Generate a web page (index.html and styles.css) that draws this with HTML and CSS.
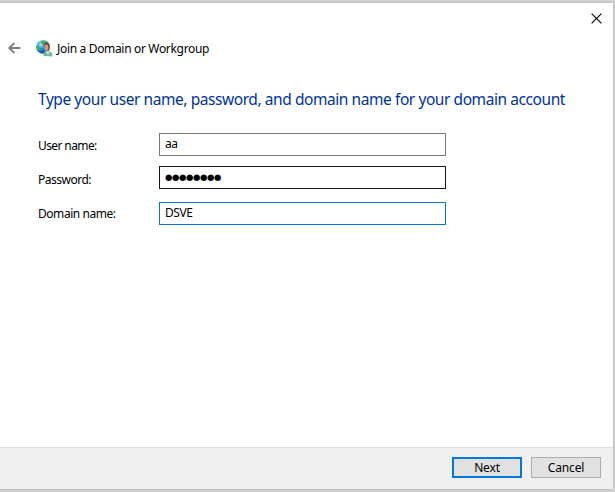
FILE: index.html
```html
<!DOCTYPE html>
<html lang="en">
<head>
<meta charset="utf-8">
<title>Join a Domain or Workgroup</title>
<link rel="stylesheet" href="styles.css">
</head>
<body>
<main class="dialog">
  <div class="titlebar">
    <svg class="close" width="11" height="11" viewBox="0 0 11 11"><path d="M.6.6l9.800 9.800M10.400.6L.6 10.400" fill="none" stroke="#111" stroke-width="1.3"/></svg>
  </div>
  <header class="header">
    <svg class="back" width="13" height="12" viewBox="0 0 13 12"><path d="M12.500 6H1.500M6.300 1L1.300 6l5 5" fill="none" stroke="#808080" stroke-width="1.9"/></svg>
    <svg class="globe" width="17" height="17" viewBox="0 0 17 17">
      <defs><radialGradient id="sea" cx=".35" cy=".3" r=".75"><stop offset="0" stop-color="#a5ebff"/><stop offset=".45" stop-color="#1c8ddd"/><stop offset="1" stop-color="#10348e"/></radialGradient></defs>
      <circle cx="7" cy="7" r="6.8" fill="url(#sea)"/>
      <path d="M6 1l4-.3 1.500 1.200-3 .8-1 2-1.500-.5-1-1.500zM.6 6l1.800.3 1.600 1.700-.4 2-1 1L.8 9z" fill="#42b649"/>
      <path d="M7.500 16l.3-3.500 2.200-1.500 3.500 0 2.500 2.200.5 3.300z" fill="#6bbb96"/>
      <path d="M10 11l2 4 1.500-4z" fill="#d7eee3"/>
      <path d="M7.600 5Q8 2.500 10.700 2.500q3 0 3 3.500l-.5 3.500-2 2-2.200-1.500z" fill="#7b4a2d"/>
      <ellipse cx="10.400" cy="7.700" rx="2" ry="3.100" fill="#d39a73"/>
    </svg>
    <span class="title">Join a Domain or Workgroup</span>
  </header>
  <form class="content">
    <h1 class="heading">Type your user name, password, and domain name for your domain account</h1>
    <div class="row"><label class="label user-label" for="user">User name:</label><input class="field" id="user" type="text" value="aa"></div>
    <div class="row row-password"><span class="label password-label">Password:</span><div class="field password">●●●●●●●●</div></div>
    <div class="row row-domain"><label class="label domain-label" for="domain">Domain name:</label><input class="field field-active" id="domain" type="text" value="DSVE"></div>
  </form>
  <footer class="footer">
    <button class="button next" type="button">Next</button>
    <button class="button cancel" type="button">Cancel</button>
  </footer>
</main>
</body>
</html>
```
FILE: styles.css
```css
* { box-sizing: border-box; }
body {
  margin: 0;
  height: 492px;
  padding: 3px 2px 3px 0;
  overflow: hidden;
  background: #d4d4d4;
  color: #000;
  font-family: "Noto Sans", "Open Sans", sans-serif;
  font-size: 12px;
}
.dialog {
  height: 486px;
  display: flex;
  flex-direction: column;
  background: #fff;
  box-shadow: 0 0 3px #aaa;
}
.titlebar {
  height: 31px;
  display: flex;
  justify-content: flex-end;
  padding: 10px 11px 0 0;
}
.header {
  height: 28px;
  display: flex;
  align-items: center;
  padding-left: 8px;
}
.back { margin-bottom: 1px; }
.globe { margin: 0 4px 0 15px; }
.title { line-height: 16px; letter-spacing: -.33px; margin-top: 2px; white-space: nowrap; }
.content { flex: 1; padding: 27px 0 0 38px; }
.heading {
  margin: 0 0 23px;
  height: 21px;
  font-size: 15.500px;
  font-weight: 400;
  line-height: 21px;
  letter-spacing: -.43px;
  white-space: nowrap;
  color: #003399;
}
.row { display: flex; height: 23px; }
.row-password { margin-top: 10px; }
.row-domain { margin-top: 13px; }
.label { width: 121px; line-height: 16px; padding-top: 5px; white-space: nowrap; letter-spacing: -.6px; }
.password-label { padding-top: 6px; letter-spacing: -.5px; }
.domain-label { padding-top: 4px; letter-spacing: -.45px; }
.field {
  width: 287px;
  height: 23px;
  margin: 0;
  padding: 0 5px 2px;
  border: 1px solid #7a7a7a;
  background: #fff;
  color: #000;
  font: 12px "Noto Sans", "Open Sans", sans-serif;
  letter-spacing: -.45px;
}
.password {
  border-color: #171717;
  font-family: "DejaVu Sans", sans-serif;
  font-size: 8.500px;
  line-height: 20px;
  letter-spacing: -.4px;
}
.field-active { border: 1px solid #0078d7; }
.footer {
  height: 42px;
  display: flex;
  justify-content: flex-end;
  gap: 9px;
  padding: 9px 12px 0 0;
  border-top: 1px solid #dfdfdf;
  background: #f0f0f0;
}
.button {
  width: 70px;
  height: 21px;
  margin: 0;
  padding: 0;
  border: 1px solid #adadad;
  border-radius: 0;
  background: #e1e1e1;
  color: #000;
  font: 12px/16px "Noto Sans", "Open Sans", sans-serif;
  letter-spacing: -.15px;
}
.next { border: 2px solid #0078d7; }
```
